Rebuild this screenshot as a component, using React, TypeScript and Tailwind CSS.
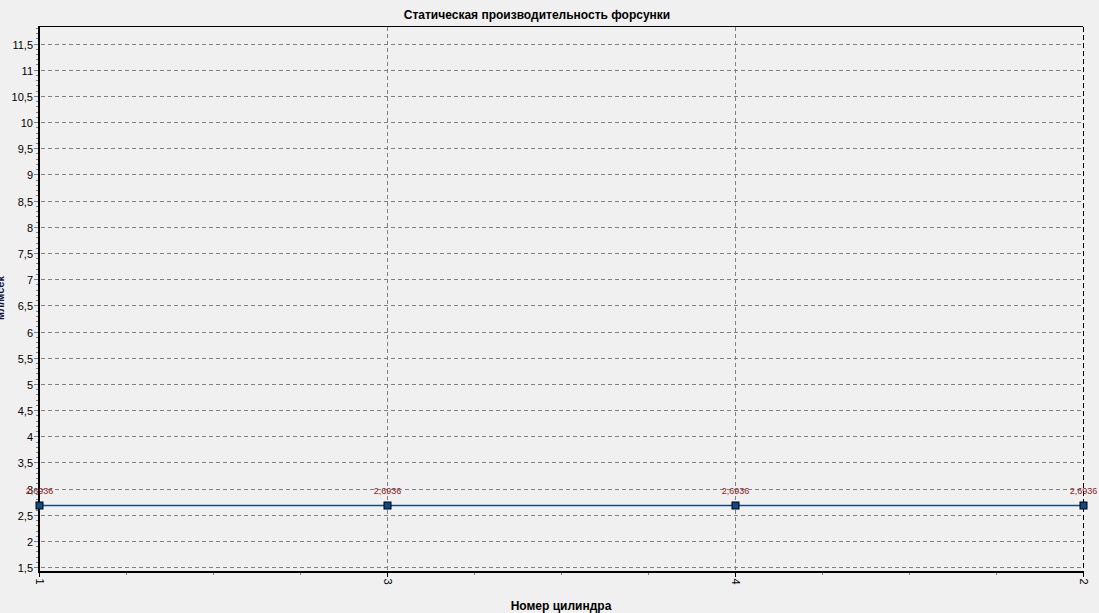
import React from 'react'

const yPx = (v: number) => 567.7 - (v - 1.5) * 52.37
const xPx = (i: number) => 39.3 + i * 348.07

const cylinders = ['1', '3', '4', '2']
const value = 2.6936

const yMajor = Array.from({ length: 21 }, (_, i) => 1.5 + i * 0.5)
const yMinor = Array.from({ length: 104 }, (_, i) => 1.5 + i * 0.1).filter(v => v <= 11.84)

const fmt = (v: number) => String(v).replace('.', ',')

export default function App() {
  const lineY = Math.floor(yPx(value)) + 0.5

  return (
    <div className="flex h-[613px] w-[1099px] flex-col overflow-hidden bg-[#f0f0f0] font-['Liberation_Sans',Arial,sans-serif] text-black">
      <div className="flex h-[26px] shrink-0 items-center justify-center pr-[25px] pt-[3px] text-[12px] font-bold leading-none">
        Статическая производительность форсунки
      </div>

      <svg width={1099} height={569} viewBox="0 26 1099 569" className="block shrink-0" fontFamily="'Liberation Sans', Arial, sans-serif">
        {/* horizontal grid + y labels */}
        {yMajor.map(v => {
          const y = Math.floor(yPx(v)) + 0.5
          return (
            <g key={v}>
              <line x1={34} x2={1083} y1={y} y2={y} stroke="#808080" strokeDasharray="4 3" />
              <text x={33} y={Math.floor(yPx(v)) + 4.5} fontSize={11} textAnchor="end" fill="#000">
                {fmt(v)}
              </text>
            </g>
          )
        })}

        {/* y minor ticks */}
        {yMinor.map((v, i) => {
          const y = Math.floor(yPx(v)) + 0.5
          return <line key={i} x1={36} x2={38} y1={y} y2={y} stroke="#808080" />
        })}

        {/* vertical grid */}
        {cylinders.slice(1).map((c, i) => {
          const x = Math.floor(xPx(i + 1)) + 0.5
          const last = i === cylinders.length - 2
          return (
            <line
              key={c}
              x1={x}
              x2={x}
              y1={27}
              y2={571}
              stroke={last ? '#000' : '#808080'}
              strokeDasharray={last ? '5 3' : '4 3'}
            />
          )
        })}

        {/* top border */}
        <line x1={39} x2={1083} y1={26.5} y2={26.5} stroke="#000" />

        {/* x ticks */}
        {Array.from({ length: 13 }, (_, i) => {
          const x = Math.floor(39.3 + i * 87.02) + 0.5
          const major = i % 4 === 0
          return <line key={i} x1={x} x2={x} y1={573} y2={major ? 577 : 575} stroke={major ? '#000' : '#808080'} />
        })}

        {/* axes */}
        <line x1={39} x2={39} y1={26} y2={573} stroke="#000" strokeWidth={2} />
        <line x1={38} x2={1084} y1={572} y2={572} stroke="#000" strokeWidth={2} />

        {/* x labels */}
        {cylinders.map((c, i) => (
          <text key={c} fontSize={11} fill="#000" transform={`translate(${Math.floor(xPx(i)) - 3.5} 578.5) rotate(90)`}>
            {c}
          </text>
        ))}

        {/* series */}
        <line x1={xPx(0)} x2={xPx(3)} y1={lineY} y2={lineY} stroke="#0f4c8a" strokeWidth={1.5} />
        {cylinders.map((c, i) => {
          const x = Math.floor(xPx(i))
          return (
            <g key={c}>
              <rect x={x - 3} y={Math.floor(lineY) - 3} width={7} height={7} fill="#0b4a8b" stroke="#000" strokeWidth={1} />
              <text x={x + 0.5} y={494} fontSize={9} textAnchor="middle" fill="#8b1c1c">
                {fmt(value)}
              </text>
            </g>
          )
        })}

        {/* y axis title, clipped by the window edge */}
        <text fontSize={11} fontWeight="bold" fill="#14143c" textAnchor="middle" transform="translate(3.5 298) rotate(-90)">
          мл/мсек
        </text>
      </svg>

      <div className="flex flex-1 items-center justify-center pl-[23px] pt-[3px] text-[12px] font-bold leading-none">
        Номер цилиндра
      </div>
    </div>
  )
}
